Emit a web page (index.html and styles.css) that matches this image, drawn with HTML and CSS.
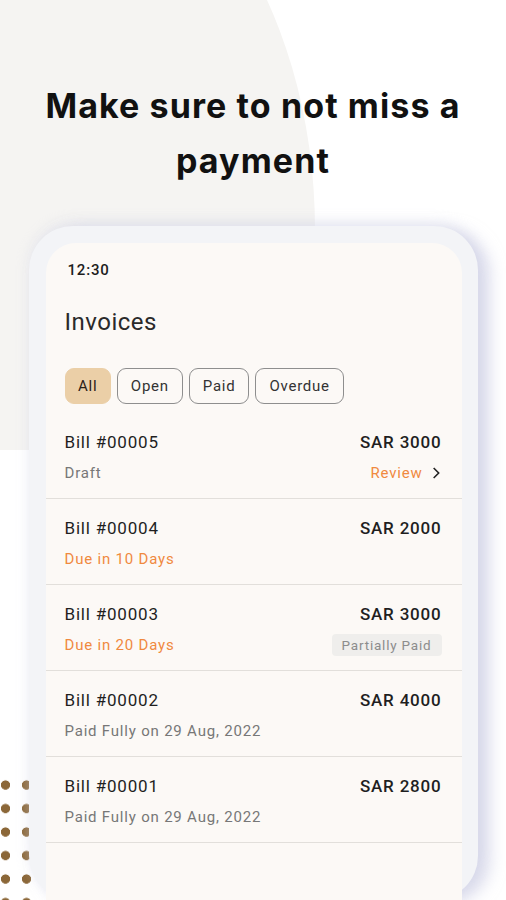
FILE: index.html
```html
<!DOCTYPE html>
<html lang="en">
<head>
    <meta charset="UTF-8">
    <meta name="viewport" content="width=device-width, initial-scale=1.0">
    <title>Invoices</title>
    <link rel="stylesheet" href="styles.css">
</head>
<body>
    <div class="page">
        <div class="blob"></div>
        <div class="dots"></div>

        <h1 class="headline">Make sure to not miss a<br>payment</h1>

        <div class="phone">
            <div class="screen">
                <div class="status">12:30</div>
                <h2 class="screen-title">Invoices</h2>

                <div class="chips">
                    <button class="chip active">All</button>
                    <button class="chip">Open</button>
                    <button class="chip">Paid</button>
                    <button class="chip">Overdue</button>
                </div>

                <ul class="bills">
                    <li class="bill">
                        <div class="bill-line">
                            <span class="bill-no">Bill #00005</span>
                            <span class="bill-amount">SAR 3000</span>
                        </div>
                        <div class="bill-line">
                            <span class="bill-status">Draft</span>
                            <span class="review">Review
                                <svg width="16" height="16" viewBox="0 0 24 24"><path d="M8.5 4.5l7.5 7.5-7.5 7.5" fill="none" stroke="#222" stroke-width="2.4"/></svg>
                            </span>
                        </div>
                    </li>
                    <li class="bill">
                        <div class="bill-line">
                            <span class="bill-no">Bill #00004</span>
                            <span class="bill-amount">SAR 2000</span>
                        </div>
                        <div class="bill-line">
                            <span class="bill-status due">Due in 10 Days</span>
                        </div>
                    </li>
                    <li class="bill">
                        <div class="bill-line">
                            <span class="bill-no">Bill #00003</span>
                            <span class="bill-amount">SAR 3000</span>
                        </div>
                        <div class="bill-line">
                            <span class="bill-status due">Due in 20 Days</span>
                            <span class="badge">Partially Paid</span>
                        </div>
                    </li>
                    <li class="bill">
                        <div class="bill-line">
                            <span class="bill-no">Bill #00002</span>
                            <span class="bill-amount">SAR 4000</span>
                        </div>
                        <div class="bill-line">
                            <span class="bill-status">Paid Fully on 29 Aug, 2022</span>
                        </div>
                    </li>
                    <li class="bill">
                        <div class="bill-line">
                            <span class="bill-no">Bill #00001</span>
                            <span class="bill-amount">SAR 2800</span>
                        </div>
                        <div class="bill-line">
                            <span class="bill-status">Paid Fully on 29 Aug, 2022</span>
                        </div>
                    </li>
                </ul>
            </div>
        </div>
    </div>
</body>
</html>
```

FILE: styles.css
```css
body {
    margin: 0;
    padding: 0;
    background-color: #fff;
    font-family: Roboto, "Liberation Sans", sans-serif;
    color: #222;
}

.page {
    position: relative;
    width: 506px;
    height: 900px;
    overflow: hidden;
    display: flex;
    flex-direction: column;
    align-items: center;
}

/* decorative background shapes */
.blob {
    position: absolute;
    left: -100px;
    top: -194px;
    width: 415px;
    height: 644px;
    background-color: #f5f4f2;
    border-top-right-radius: 300px 424px;
    z-index: 0;
}

.dots {
    position: absolute;
    left: 0;
    top: 777px;
    width: 42px;
    height: 123px;
    background-image: radial-gradient(circle at 5.5px 8px, #8b6738 4.3px, transparent 4.9px);
    background-size: 21px 23.5px;
    z-index: 0;
}

.headline {
    position: relative;
    z-index: 1;
    margin: 78px 0 0;
    font-family: Inter, "Liberation Sans", sans-serif;
    font-size: 34px;
    font-weight: 700;
    line-height: 55px;
    text-align: center;
    color: #111;
    letter-spacing: 1.1px;
}

.phone {
    position: relative;
    z-index: 1;
    margin-top: 38px;
    width: 449px;
    height: 720px;
    box-sizing: border-box;
    padding: 17px 16px 0 17px;
    background-color: #f3f4f7;
    border-radius: 44px;
    box-shadow: 12px 4px 16px rgba(190, 192, 220, 0.55), 0 -4px 14px rgba(215, 218, 232, 0.45);
}

.screen {
    height: 100%;
    background-color: #fcf9f6;
    border-radius: 30px 30px 0 0;
    letter-spacing: 0.05em;
}

.status {
    padding: 19px 0 0 22px;
    font-size: 15px;
    font-weight: 500;
    line-height: 16px;
    color: #1d1d1d;
}

.screen-title {
    margin: 30px 0 0 19px;
    font-size: 24px;
    font-weight: 400;
    line-height: 28px;
    letter-spacing: 0.5px;
    color: #2a2a2a;
}

.chips {
    display: flex;
    gap: 6px;
    margin: 32px 0 0 19px;
}

.chip {
    height: 36px;
    padding: 0 13px;
    font-family: Roboto, "Liberation Sans", sans-serif;
    font-size: 15px;
    letter-spacing: 0.05em;
    color: #333;
    background-color: transparent;
    border: 1px solid #8e8e8e;
    border-radius: 9px;
}

.chip.active {
    padding: 0 12.5px;
    background-color: #ebcfa7;
    border-color: #ebcfa7;
    color: #2b2118;
}

.bills {
    list-style: none;
    margin: 9px 0 0;
    padding: 0;
}

.bill {
    display: flex;
    flex-direction: column;
    gap: 10px;
    padding: 18px 20px 15px 19px;
    border-bottom: 1px solid #e2dfdb;
}

.bill-line {
    display: flex;
    justify-content: space-between;
    align-items: center;
    height: 20px;
}

.bill-line:first-child {
    height: 22px;
}

.bill-no,
.bill-amount {
    font-size: 17px;
    line-height: 22px;
    color: #1f1f1f;
}

.bill-amount {
    font-weight: 500;
}

.bill-status {
    font-size: 15px;
    line-height: 20px;
    color: #777;
}

.bill-status.due {
    color: #f0893f;
}

.review {
    display: flex;
    align-items: center;
    gap: 5px;
    margin-right: -2px;
    font-size: 15px;
    line-height: 20px;
    color: #f0893f;
}

.badge {
    padding: 1px 10px;
    font-size: 13.5px;
    line-height: 20px;
    color: #8c8c8c;
    background-color: #efeeec;
    border-radius: 4px;
}
```
